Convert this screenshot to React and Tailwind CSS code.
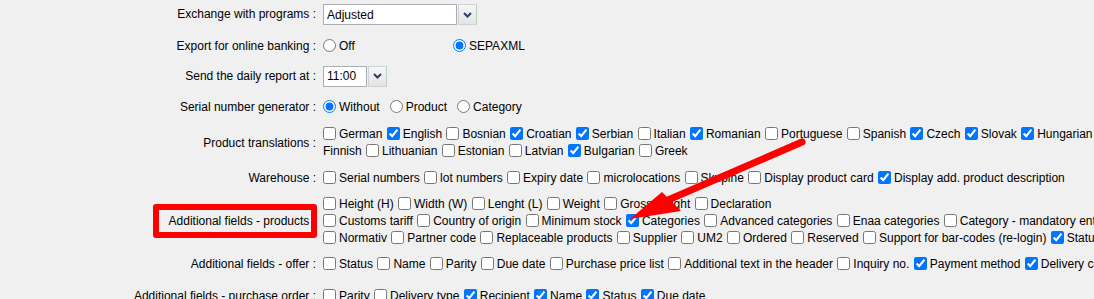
import React from "react";

const Cb = ({ c, t }) => (
  <>
    <input
      type="checkbox"
      defaultChecked={!!c}
      className="ml-[1px] mr-[3px] w-[13px] h-[13px] align-[-2px]"
    />
    {t}{" "}
  </>
);

const Radio = ({ c, name, ml = "ml-[4px]" }) => (
  <input
    type="radio"
    name={name}
    defaultChecked={!!c}
    className={`${ml} mr-[3px] w-[13px] h-[13px] align-[-2px]`}
  />
);

const Chevron = () => (
  <svg width="9" height="6" viewBox="0 0 9 6">
    <path d="M1 1 L4.5 4.5 L8 1" fill="none" stroke="#2a3d6b" strokeWidth="2" />
  </svg>
);

const Select = ({ value, w }) => (
  <div className="flex items-center ml-[4px]">
    <div
      className={`${w} h-[21px] bg-white border border-[#abadb3] pl-[3px] flex items-center leading-none`}
    >
      {value}
    </div>
    <div className="ml-[1px] w-[19px] h-[21px] border border-[#cfd3d8] border-r-[#b9d3bb] bg-gradient-to-b from-[#f6f6f6] to-[#e4e4e4] flex items-center justify-center">
      <Chevron />
    </div>
  </div>
);

const Row = ({ h, label, children }) => (
  <div className={`flex ${h}`}>
    <div className="w-[319px] shrink-0 pr-[3px] flex items-center justify-end text-right leading-[17px]">
      {label}
    </div>
    <div className="flex-1 flex flex-col justify-center whitespace-nowrap leading-[17px]">
      {children}
    </div>
  </div>
);

export default function App() {
  return (
    <div className="relative w-[1094px] h-[299px] overflow-hidden bg-[#f0f0f0] text-black text-[12px] font-['Liberation_Sans',Arial,sans-serif]">
      <Row h="h-[29px]" label="Exchange with programs :">
        <div className="flex">
          <Select value="Adjusted" w="w-[134px]" />
        </div>
      </Row>
      <Row h="h-[34px]" label="Export for online banking :">
        <div className="flex">
          <div className="w-[130px]">
            <Radio name="bank" />Off
          </div>
          <div>
            <Radio name="bank" c />SEPAXML
          </div>
        </div>
      </Row>
      <Row h="h-[26px]" label="Send the daily report at :">
        <div className="flex">
          <Select value="11:00" w="w-[44px]" />
        </div>
      </Row>
      <Row h="h-[36px]" label="Serial number generator :">
        <div>
          <Radio name="ser" c />Without
          <Radio name="ser" ml="ml-[10px]" />Product
          <Radio name="ser" ml="ml-[10px]" />Category
        </div>
      </Row>
      <Row h="h-[36px]" label="Product translations :">
        <div className="pl-[3px]">
          <Cb t="German" />
          <Cb c t="English" />
          <Cb t="Bosnian" />
          <Cb c t="Croatian" />
          <Cb c t="Serbian" />
          <Cb t="Italian" />
          <Cb c t="Romanian" />
          <Cb t="Portuguese" />
          <Cb t="Spanish" />
          <Cb c t="Czech" />
          <Cb c t="Slovak" />
          <Cb c t="Hungarian" />
          <input type="checkbox" className="ml-[1px] mr-[3px] w-[13px] h-[13px] align-[-2px]" />
        </div>
        <div className="pl-[4px]">
          Finnish{" "}
          <Cb t="Lithuanian" />
          <Cb t="Estonian" />
          <Cb t="Latvian" />
          <Cb c t="Bulgarian" />
          <Cb t="Greek" />
        </div>
      </Row>
      <Row h="h-[35px]" label="Warehouse :">
        <div className="pl-[3px]">
          <Cb t="Serial numbers" />
          <Cb t="lot numbers" />
          <Cb t="Expiry date" />
          <Cb t="microlocations" />
          <Cb t="Skupine" />
          <Cb t="Display product card" />
          <Cb c t="Display add. product description" />
        </div>
      </Row>
      <Row h="h-[51px]" label="Additional fields - products :">
        <div className="pl-[3px]">
          <Cb t="Height (H)" />
          <Cb t="Width (W)" />
          <Cb t="Lenght (L)" />
          <Cb t="Weight" />
          <Cb t="Gross weight" />
          <Cb t="Declaration" />
        </div>
        <div className="pl-[3px]">
          <Cb t="Customs tariff" />
          <Cb t="Country of origin" />
          <Cb t="Minimum stock" />
          <Cb c t="Categories" />
          <Cb t="Advanced categories" />
          <Cb t="Enaa categories" />
          <Cb t="Category - mandatory entry" />
        </div>
        <div className="pl-[3px]">
          <Cb t="Normativ" />
          <Cb t="Partner code" />
          <Cb t="Replaceable products" />
          <Cb t="Supplier" />
          <Cb t="UM2" />
          <Cb t="Ordered" />
          <Cb t="Reserved" />
          <Cb t="Support for bar-codes (re-login)" />
          <Cb c t="Status" />
        </div>
      </Row>
      <Row h="h-[35px]" label="Additional fields - offer :">
        <div className="pl-[3px]">
          <Cb t="Status" />
          <Cb t="Name" />
          <Cb t="Parity" />
          <Cb t="Due date" />
          <Cb t="Purchase price list" />
          <Cb t="Additional text in the header" />
          <Cb t="Inquiry no." />
          <Cb c t="Payment method" />
          <Cb c t="Delivery conditions" />
        </div>
      </Row>
      <Row h="h-[28px]" label="Additional fields - purchase order :">
        <div className="pl-[3px]">
          <Cb t="Parity" />
          <Cb t="Delivery type" />
          <Cb c t="Recipient" />
          <Cb c t="Name" />
          <Cb c t="Status" />
          <Cb c t="Due date" />
        </div>
      </Row>

      {/* annotation: red box */}
      <div className="absolute left-[153px] top-[204px] w-[164px] h-[34px] border-[6px] border-[#ff0000] rounded-[3px] pointer-events-none" />
      {/* annotation: red arrow */}
      <svg
        className="absolute left-0 top-0 pointer-events-none"
        width="1094"
        height="299"
        viewBox="0 0 1094 299"
      >
        <line x1="802" y1="142" x2="668" y2="200" stroke="#ff0000" strokeWidth="7" strokeLinecap="round" />
        <polygon points="630,219 662,192 681,211" fill="#ff0000" />
      </svg>
    </div>
  );
}
